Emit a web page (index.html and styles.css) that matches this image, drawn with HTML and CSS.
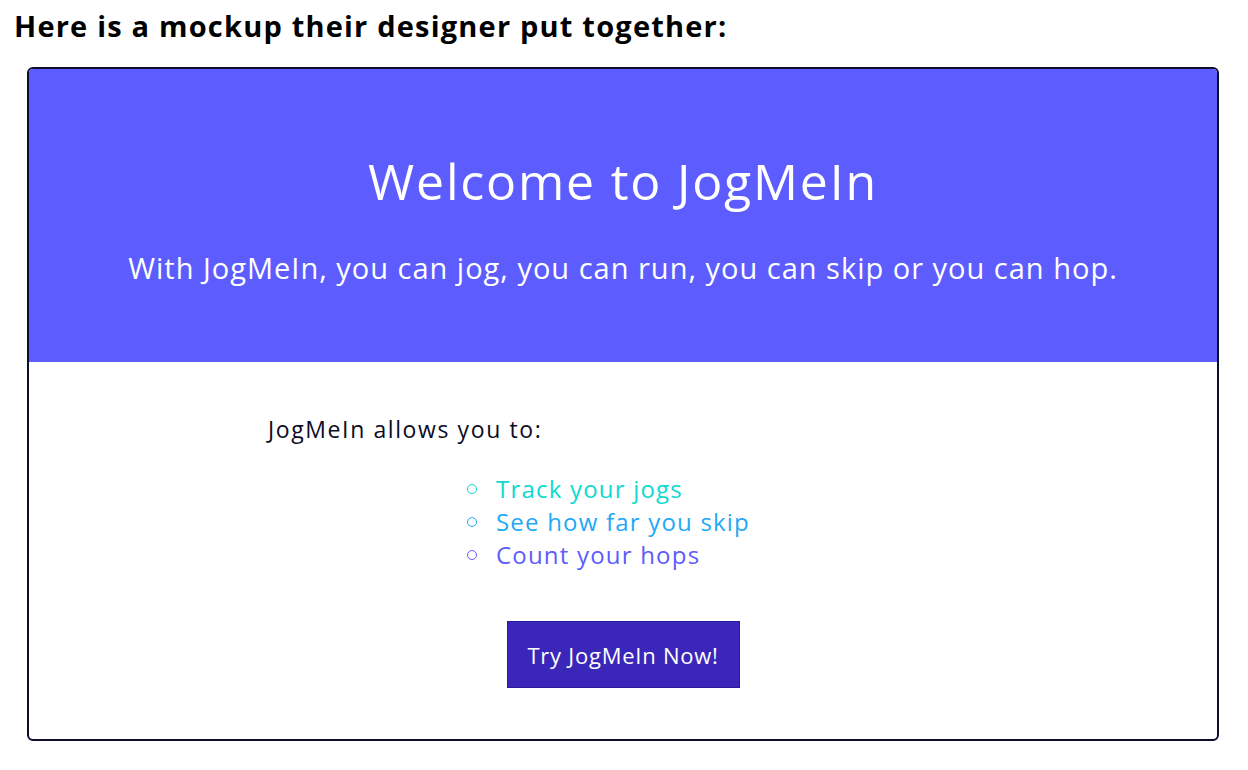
FILE: index.html
```html
<!DOCTYPE html>
<html lang="en">
<head>
<meta charset="utf-8">
<title>JogMeIn mockup</title>
<link rel="stylesheet" href="styles.css">
</head>
<body>
<p class="intro">Here is a mockup their designer put together:</p>
<div class="card">
  <header class="hero">
    <h1 class="hero-title">Welcome to JogMeIn</h1>
    <p class="hero-sub">With JogMeIn, you can jog, you can run, you can skip or you can hop.</p>
  </header>
  <section class="content">
    <p class="lead">JogMeIn allows you to:</p>
    <ul class="features">
      <li class="f1">Track your jogs</li>
      <li class="f2">See how far you skip</li>
      <li class="f3">Count your hops</li>
    </ul>
    <div class="cta-row">
      <button class="cta">Try JogMeIn Now!</button>
    </div>
  </section>
</div>
</body>
</html>
```
FILE: styles.css
```css
html, body {
  margin: 0;
  padding: 0;
  background: #ffffff;
}
body {
  font-family: "Open Sans", Lato, sans-serif;
  color: #0c0c24;
  padding: 8px 0 0 14px;
}
.intro {
  margin: 0;
  font-size: 29px;
  font-weight: 700;
  line-height: 36px;
  letter-spacing: 1.2px;
  color: #000;
}
.card {
  margin: 23px 0 0 13px;
  width: 1188px;
  height: 670px;
  border: 2px solid #0d0d2e;
  border-radius: 6px;
  overflow: hidden;
  display: flex;
  flex-direction: column;
}
.hero {
  background: #5c5cff;
  height: 293px;
  color: #ffffff;
  text-align: center;
  padding-top: 80px;
  box-sizing: border-box;
}
.hero-title {
  margin: 0;
  font-size: 50px;
  font-weight: 400;
  line-height: 64px;
  letter-spacing: 1.8px;
}
.hero-sub {
  margin: 35px 0 0;
  font-size: 29px;
  line-height: 40px;
  letter-spacing: 1px;
}
.content {
  flex: 1;
  padding: 52px 0 0 239px;
}
.lead {
  margin: 0;
  font-size: 23px;
  font-weight: 500;
  line-height: 30px;
  letter-spacing: 1.6px;
  color: #0c0c24;
}
.features {
  margin: 28px 0 0 228px;
  padding: 0;
  list-style: none;
  font-size: 24px;
  line-height: 33px;
  letter-spacing: 1.2px;
}
.features li {
  display: flex;
  align-items: center;
}
.features li::before {
  content: "";
  width: 8px;
  height: 8px;
  border: 1.5px solid currentColor;
  border-radius: 50%;
  margin-left: -29px;
  margin-right: 19px;
  flex: none;
}
.f1 { color: #0fd9d0; }
.f2 { color: #1fa9f6; }
.f3 { color: #5c5cff; }
.cta-row {
  display: flex;
  justify-content: center;
  margin: 50px 0 0 -239px;
}
.cta {
  width: 233px;
  height: 67px;
  background: #3a26b8;
  border: 1px solid #2a1a9a;
  color: #ffffff;
  font-family: "Open Sans", Lato, sans-serif;
  font-size: 22px;
  letter-spacing: 0.75px;
  padding: 0;
}
```
